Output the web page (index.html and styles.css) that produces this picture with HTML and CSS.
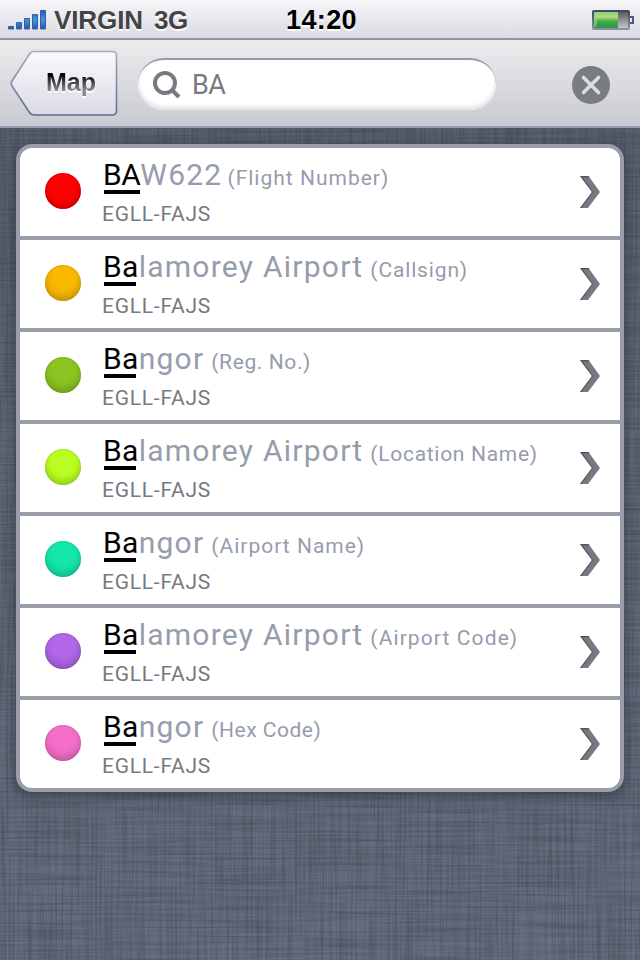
FILE: index.html
```html
<!DOCTYPE html>
<html lang="en"><head><meta charset="utf-8"><title>Search</title><link rel="stylesheet" href="styles.css"></head>
<body>
<svg class="linen" width="640" height="960" aria-hidden="true">
<filter id="weave-h" x="0" y="0" width="100%" height="100%" color-interpolation-filters="sRGB"><feTurbulence type="fractalNoise" baseFrequency="0.01 0.45" numOctaves="2" seed="4"/><feColorMatrix values="0 0 0 0 .2  0 0 0 0 .22  0 0 0 0 .25  .75 0 0 0 -.28"/></filter>
<filter id="weave-v" x="0" y="0" width="100%" height="100%" color-interpolation-filters="sRGB"><feTurbulence type="fractalNoise" baseFrequency="0.45 0.01" numOctaves="2" seed="9"/><feColorMatrix values="0 0 0 0 .2  0 0 0 0 .22  0 0 0 0 .25  .75 0 0 0 -.28"/></filter>
<rect width="640" height="960" filter="url(#weave-h)"/><rect width="640" height="960" filter="url(#weave-v)"/>
</svg>
<div class="screen">
<header class="status">
<div class="carrier"><svg width="38" height="20" viewBox="0 0 38 20"><defs><linearGradient id="sig" x2="0" y2="1"><stop stop-color="#2b59b0"/><stop offset=".5" stop-color="#3f9ad8"/><stop offset="1" stop-color="#3157ae"/></linearGradient></defs><g fill="url(#sig)" stroke="#345dab"><path d="M.5 16.500h5v2.500h-5zM8.500 12.500h5v6.500h-5zM16.500 8.500h5v10.500h-5zM24.500 4.500h5v14.500h-5zM32.500 .5h5v18.500h-5z"/></g></svg><span class="name">VIRGIN</span><span class="net">3G</span></div>
<time>14:20</time>
<svg class="battery" width="42" height="22" viewBox="0 0 42 22"><defs><linearGradient id="bg" x2="0" y2="1"><stop stop-color="#8fce70"/><stop offset=".3" stop-color="#b2dc83"/><stop offset=".6" stop-color="#43a94a"/><stop offset="1" stop-color="#2e9544"/></linearGradient><linearGradient id="be" x2="0" y2="1"><stop stop-color="#555"/><stop offset="1" stop-color="#ccc"/></linearGradient><linearGradient id="bo" x2="0" y2="1"><stop stop-color="#3e4763"/><stop offset="1" stop-color="#8a90a3"/></linearGradient></defs><rect x="1" y="1" width="36" height="18" rx="1" fill="url(#be)" stroke="url(#bo)" stroke-width="2"/><rect x="2" y="2" width="24" height="16" fill="url(#bg)"/><path d="M2 2l3 3v10l-3 3z" fill="#8dd873" opacity=".6"/><path d="M38 7h3v6h-3" fill="none" stroke="#525a75" stroke-width="2"/></svg>
</header>
<nav class="bar">
<a class="back"><svg width="108" height="68" viewBox="0 0 108 68"><defs><linearGradient id="bf" x2="0" y2="1"><stop stop-color="#fafafc"/><stop offset="1" stop-color="#d9dae5"/></linearGradient><linearGradient id="bs" x2="0" y2="1"><stop stop-color="#a2aabf"/><stop offset="1" stop-color="#626b90"/></linearGradient></defs><path d="M24 1.500H102Q106.500 1.500 106.500 5.500V61Q106.500 65 102 65H24Q21 65 19.500 62.500L2 36Q.5 33.500 2 31L19.500 4Q21 1.500 24 1.500Z" fill="url(#bf)" stroke="url(#bs)" stroke-width="1.600"/></svg><span>Map</span></a>
<div class="search"><svg width="28" height="28" viewBox="0 0 28 28" fill="none" stroke="#777a80"><circle cx="12" cy="12" r="10" stroke-width="4"/><path d="M18.500 18.500L26 26" stroke-width="4"/></svg><span>BA</span></div>
<svg class="clear" width="38" height="38" viewBox="0 0 38 38"><circle cx="19" cy="19" r="19" fill="#797c83"/><path d="M11.500 11.500l15 15m0-15l-15 15" stroke="#dcdde1" stroke-width="3.600" stroke-linecap="round"/></svg>
</nav>
<ul class="results" id="results"></ul>
</div>
<script src="results.js"></script>
</body></html>
```
FILE: results.js
```js
const rows = [
  ["red", "BA", "W622", "(Flight Number)"],
  ["amber", "Ba", "lamorey Airport", "(Callsign)"],
  ["green", "Ba", "ngor", "(Reg. No.)"],
  ["lime", "Ba", "lamorey Airport", "(Location Name)"],
  ["teal", "Ba", "ngor", "(Airport Name)"],
  ["violet", "Ba", "lamorey Airport", "(Airport Code)"],
  ["pink", "Ba", "ngor", "(Hex Code)"]
];
document.getElementById("results").innerHTML = rows.map(([c, hit, rest, kind]) => `<li><i class="dot ${c}"></i><div class="text"><div class="title"><span class="hit">${hit}</span><span class="rest">${rest}</span><span class="kind">${kind}</span></div><div class="route">EGLL-FAJS</div></div><svg class="chevron" width="20" height="32" viewBox="0 0 20 32"><path d="M0 0H8.500L20 16L8 32H0L12 16Z" fill="#777a82"/><path d="M0 0H8.500L9.500 1.500H2.700L13 16L1.500 32H0L12 16Z" fill="#55575c"/></svg></li>`).join("");
```
FILE: styles.css
```css
* { box-sizing: border-box; }
body { margin: 0; background: linear-gradient(#575d6a, #5f6676 40%, #667081); font-family: Roboto, sans-serif; height: 960px; overflow: hidden; }
.linen { position: absolute; left: 0; top: 0; z-index: -1; }
.screen { height: 960px; }
.status { height: 40px; padding: 0 8px; display: grid; grid-template-columns: 1fr auto 1fr; align-items: center; border-bottom: 2px solid #9095a3; background: linear-gradient(#f6f6f9, #dadbe2); font-family: "Liberation Sans", sans-serif; font-weight: 700; text-shadow: 0 2px 1px #fff; }
.carrier { display: flex; align-items: center; color: #444; font-size: 26px; line-height: 38px; }
.name { margin-left: 8px; letter-spacing: -.1px; }
.net { margin-left: 11px; letter-spacing: -.4px; }
time { font-size: 27px; line-height: 38px; letter-spacing: .4px; padding: 1px 0 0 3px; }
.battery { justify-self: end; margin-right: -2px; margin-top: 2px; }
.bar { height: 88px; display: flex; align-items: flex-start; border-bottom: 2px solid #949caf; background: linear-gradient(#ececee, #c9cad1); }
.back { display: grid; margin: 10px 0 0 10px; width: 108px; }
.back > * { grid-area: 1 / 1; }
.back span { align-self: center; margin: -3px 0 0 36px; font: 700 25px "Liberation Sans", sans-serif; background: linear-gradient(#000 25%, #3c3c3e 45%, #85868b 75%); -webkit-background-clip: text; background-clip: text; color: transparent; filter: drop-shadow(0 2px 0 #fff); }
.search { margin: 18px 0 0 20px; width: 358px; height: 52px; border-radius: 26px; border-top: 2px solid #949cb0; background: #fff; box-shadow: inset 0 -3px 4px #dfe0e6; padding: 0 15px; display: flex; align-items: center; color: #777a80; font-size: 27px; }
.search span { margin-left: 11px; letter-spacing: -.6px; }
.clear { margin: 26px 0 0 76px; }
.results { list-style: none; margin: 16px 16px 0; padding: 0; width: 608px; border: 4px solid #989da9; border-radius: 16px; background: #989da9; overflow: hidden; box-shadow: 0 4px 12px rgba(20, 25, 35, .45); display: grid; gap: 4px; }
.results li { height: 88px; background: #fff; display: flex; align-items: center; padding: 0 20px 0 25px; }
.dot { width: 36px; height: 36px; border-radius: 50%; margin-top: -2px; box-shadow: inset 0 -5px 7px rgba(0, 0, 0, .18), inset 0 0 2px rgba(0, 0, 0, .2); }
.red { background: #f00; }
.amber { background: #f9b900; }
.green { background: #8bc522; }
.lime { background: #baff21; }
.teal { background: #13e7a9; }
.violet { background: #b167e7; }
.pink { background: #f56ec8; }
.text { flex: 1; margin: -3px 0 0 22px; white-space: nowrap; }
.title { display: flex; align-items: baseline; height: 46px; line-height: 46px; font-size: 30px; color: #959cac; }
.hit { position: relative; color: #000; letter-spacing: .3px; }
.hit::after { content: ""; position: absolute; left: 1px; top: 38px; width: 32px; height: 4px; background: #000; }
.rest { letter-spacing: 1.25px; }
.kind { font-size: 21px; margin-left: 7px; letter-spacing: 1px; }
.route { font-size: 21px; height: 31px; line-height: 33px; letter-spacing: .75px; margin-left: -1px; color: #777a80; }
li:nth-child(1) .hit { letter-spacing: -.5px; }
li:nth-child(1) .hit::after { width: 36px; }
li:nth-child(1) .kind { margin-left: 5px; }
li:nth-child(2) .kind { letter-spacing: .85px; }
li:nth-child(3) .kind { letter-spacing: .6px; }
li:nth-child(4) .kind { letter-spacing: .7px; }
li:nth-child(6) .kind { letter-spacing: 1.1px; }
li:nth-child(7) .kind { letter-spacing: .5px; }
.chevron { flex: none; }
```
